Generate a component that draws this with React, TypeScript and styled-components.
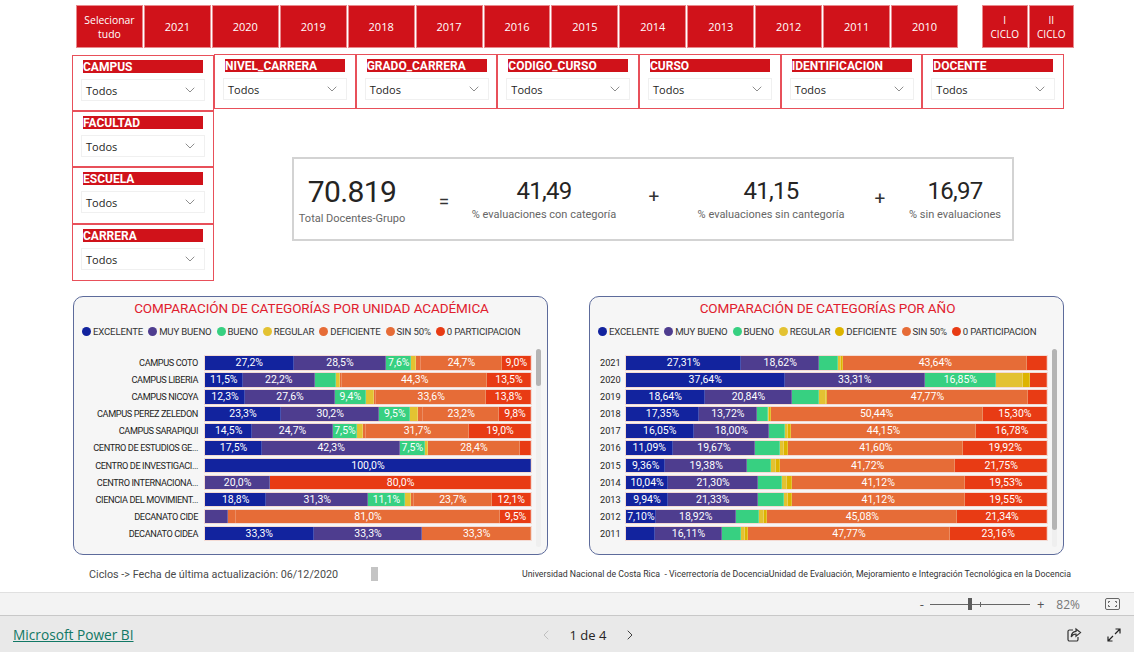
import React from 'react'
import styled, { createGlobalStyle } from 'styled-components'
import { ChevronDown, ChevronLeft, ChevronRight } from 'lucide-react'

const RED = '#d0121a'
const DIN = 'Roboto, "Liberation Sans", sans-serif'
const UI = '"Open Sans", "Noto Sans", sans-serif'

const GlobalStyle = createGlobalStyle`
  html, body {
    margin: 0;
    padding: 0;
    background: #fff;
    overflow: hidden;
  }
  * {
    box-sizing: border-box;
  }
`

const Page = styled.div`
  width: 1134px;
  height: 652px;
  display: flex;
  flex-direction: column;
  font-family: ${DIN};
`

const Report = styled.main`
  height: 592px;
  flex: none;
  padding-top: 5px;
  display: flex;
  flex-direction: column;
`

const ButtonRow = styled.div`
  display: flex;
  height: 43px;
  padding-left: 76px;
  gap: 24px;
`

const YearGrid = styled.div`
  width: 882px;
  display: grid;
  grid-template-columns: repeat(13, 1fr);
  gap: 1px;
`

const CycleGrid = styled.div`
  width: 92px;
  display: grid;
  grid-template-columns: 1fr 1fr;
  gap: 1px;
`

const FilterButton = styled.button<{ $size?: number }>`
  background: ${RED};
  border: 1px solid #e98a8d;
  color: #fff;
  padding: 0 2px;
  font-family: ${UI};
  font-size: ${({ $size }) => $size ?? 11}px;
  line-height: 14px;
`

const Filters = styled.div`
  display: flex;
  align-items: flex-start;
  padding: 6px 0 0 72px;
  height: 248px;
`

const SideColumn = styled.div`
  width: 142px;
  margin-top: 1px;
  display: flex;
  flex-direction: column;
`

const MainColumn = styled.div`
  width: 850px;
  display: flex;
  flex-direction: column;
`

const SlicerRow = styled.div`
  display: grid;
  grid-template-columns: repeat(6, 1fr);
`

const Slicer = styled.div<{ $height?: number }>`
  height: ${({ $height }) => $height ?? 55}px;
  border: 1px solid #e8505a;
  padding: 4px 0 0 8px;
`

const SlicerTitle = styled.div`
  width: 120px;
  height: 13px;
  margin-left: 2px;
  background: ${RED};
  color: #fff;
  font-size: 12px;
  font-weight: 700;
  line-height: 15px;
`

const SlicerInput = styled.div`
  width: 124px;
  height: 22px;
  margin-top: 6px;
  border: 1px solid #f0f0f0;
  padding: 0 6px 0 4px;
  display: flex;
  align-items: center;
  justify-content: space-between;
  color: #252423;
  font-family: ${UI};
  font-size: 11px;
`

const KpiCard = styled.section`
  width: 722px;
  height: 84px;
  margin: 48px 0 0 78px;
  border: 2px solid #d3d3d3;
  display: flex;
  align-items: flex-start;
`

const KpiCell = styled.div<{ $width: number; $top: number }>`
  width: ${({ $width }) => $width}px;
  flex: none;
  padding-top: ${({ $top }) => $top}px;
  display: flex;
  flex-direction: column;
  align-items: center;
  white-space: nowrap;
`

const KpiValue = styled.div<{ $large?: boolean }>`
  color: #252423;
  font-size: ${({ $large }) => ($large ? '30px' : '24px')};
  line-height: ${({ $large }) => ($large ? '34px' : '28px')};
  letter-spacing: ${({ $large }) => ($large ? '-0.6px' : '-0.7px')};
`

const KpiLabel = styled.div`
  color: #666;
  font-size: 11px;
  line-height: 14px;
  margin-top: 3px;
`

const KpiOperator = styled.div<{ $width: number; $top: number }>`
  width: ${({ $width }) => $width}px;
  flex: none;
  padding-top: ${({ $top }) => $top}px;
  text-align: center;
  color: #333;
  font-size: 19px;
  line-height: 22px;
`

const ChartRow = styled.div`
  display: flex;
  gap: 41px;
  padding-left: 73px;
`

const ChartCard = styled.section`
  width: 475px;
  height: 259px;
  background: #f6f6f6;
  border: 1px solid #5d6b9b;
  border-radius: 10px;
  padding: 2px 6px 0 8px;
  display: flex;
  flex-direction: column;
`

const ChartTitle = styled.h2`
  margin: 0;
  text-align: center;
  color: #e0202e;
  font-size: 13.5px;
  font-weight: 400;
  line-height: 18px;
  letter-spacing: -0.08px;
`

const Legend = styled.ul`
  list-style: none;
  margin: 7px 0 0;
  padding: 0;
  height: 14px;
  display: flex;
  gap: 5px;
`

const LegendItem = styled.li`
  display: flex;
  align-items: center;
  gap: 2px;
  color: #333;
  font-size: 9.6px;
  letter-spacing: -0.16px;
  white-space: nowrap;
`

const LegendDot = styled.span<{ $color: string }>`
  width: 9px;
  height: 9px;
  border-radius: 50%;
  background: ${({ $color }) => $color};
`

const PlotArea = styled.div`
  flex: none;
  margin-top: 11px;
  display: flex;
  gap: 5px;
  height: 198px;
`

const Rows = styled.div`
  flex: 1;
  padding-top: 7px;
  display: flex;
  flex-direction: column;
  gap: 3.6px;
`

const BarRow = styled.div<{ $labelWidth: number }>`
  display: grid;
  grid-template-columns: ${({ $labelWidth }) => $labelWidth}px 1fr;
  column-gap: 7px;
  height: 13.5px;
`

const RowLabel = styled.div<{ $left?: boolean }>`
  color: #252423;
  font-size: 9.2px;
  letter-spacing: ${({ $left }) => ($left ? '0' : '-0.4px')};
  line-height: 13.5px;
  text-align: ${({ $left }) => ($left ? 'left' : 'right')};
  padding-left: ${({ $left }) => ($left ? '2px' : '0')};
  white-space: nowrap;
`

const Bar = styled.div`
  display: flex;
  height: 13.5px;
  outline: 1px solid rgba(240, 170, 150, 0.35);
`

const Segment = styled.div`
  min-width: 0;
  color: #fff;
  font-size: 10.5px;
  line-height: 13.5px;
  text-align: center;
  overflow: hidden;
  white-space: nowrap;
  box-shadow: inset -1px 0 rgba(255, 255, 255, 0.22);
`

const ScrollTrack = styled.div`
  width: 5px;
  flex: none;
  background: #efefef;
  border-radius: 3px;
`

const ScrollThumb = styled.div<{ $height: number }>`
  height: ${({ $height }) => $height}px;
  background: #b4b4b4;
  border-radius: 3px;
`

const Footer = styled.div`
  display: flex;
  align-items: center;
  height: 14px;
  margin-top: 12px;
  padding-left: 89px;
  color: #4a4a4a;
`

const UpdatedText = styled.span`
  width: 282px;
  flex: none;
  font-size: 10.8px;
`

const FooterMark = styled.span`
  width: 7px;
  height: 14px;
  flex: none;
  background: #c4c4c4;
`

const CreditText = styled.span`
  margin-left: 144px;
  font-size: 8.75px;
  white-space: nowrap;
  color: #333;
`

const ZoomBar = styled.div`
  height: 24px;
  flex: none;
  background: #f3f3f3;
  border-top: 1px solid #e0e0e0;
  border-bottom: 1px solid #c8c8c8;
  display: flex;
  align-items: center;
  justify-content: flex-end;
  padding-right: 14px;
  font-family: ${UI};
  color: #666;
`

const ZoomStep = styled.span`
  font-size: 13px;
  line-height: 20px;
  color: #555;
`

const ZoomSlider = styled.div`
  position: relative;
  width: 100px;
  height: 1px;
  margin: 0 7px 0 6px;
  background: #666;
`

const ZoomThumb = styled.span`
  position: absolute;
  left: 38px;
  top: -6px;
  width: 4px;
  height: 12px;
  background: #5c5c5c;
`

const ZoomTick = styled.span`
  position: absolute;
  left: 50px;
  top: -2px;
  width: 1px;
  height: 5px;
  background: #666;
`

const ZoomValue = styled.span`
  margin: 0 25px 0 12px;
  font-size: 12px;
  color: #777;
`

const BottomBar = styled.footer`
  flex: 1;
  background: #e9e9e9;
  display: grid;
  grid-template-columns: 1fr auto 1fr;
  align-items: center;
  padding: 1px 13px 0;
  font-family: ${UI};
`

const PowerBiLink = styled.a`
  color: #117865;
  font-size: 13.7px;
  text-decoration: underline;
`

const Pager = styled.div`
  display: flex;
  align-items: center;
  gap: 16px;
  margin-left: 42px;
  color: #252423;
  font-size: 13px;
  font-weight: 500;
`

const BottomActions = styled.div`
  display: flex;
  justify-content: flex-end;
  align-items: center;
  gap: 25px;
`

const categories = {
  excelente: '#12239e',
  muyBueno: '#4e3d8f',
  bueno: '#37d081',
  regular: '#e3c232',
  sin: '#e66c37',
  cero: '#e83b14',
}

const legendNames = ['EXCELENTE', 'MUY BUENO', 'BUENO', 'REGULAR', 'DEFICIENTE', 'SIN 50%', '0 PARTICIPACION']

const seriesColors = (deficiente: string) => [
  categories.excelente,
  categories.muyBueno,
  categories.bueno,
  categories.regular,
  deficiente,
  categories.sin,
  categories.cero,
]

type Row = [string, number[]]

const unitRows: Row[] = [
  ['CAMPUS COTO', [27.2, 28.5, 7.6, 1.5, 1.6, 24.7, 9.0]],
  ['CAMPUS LIBERIA', [11.5, 22.2, 6.5, 1.3, 0.6, 44.3, 13.5]],
  ['CAMPUS NICOYA', [12.3, 27.6, 9.4, 2.5, 0.8, 33.6, 13.8]],
  ['CAMPUS PEREZ ZELEDON', [23.3, 30.2, 9.5, 2.4, 1.6, 23.2, 9.8]],
  ['CAMPUS SARAPIQUI', [14.5, 24.7, 7.5, 1.9, 0.7, 31.7, 19.0]],
  ['CENTRO DE ESTUDIOS GE...', [17.5, 42.3, 7.5, 0.9, 0, 28.4, 3.3]],
  ['CENTRO DE INVESTIGACI...', [100, 0, 0, 0, 0, 0, 0]],
  ['CENTRO INTERNACIONA...', [0, 20, 0, 0, 0, 0, 80]],
  ['CIENCIA DEL MOVIMIENT...', [18.8, 31.3, 11.1, 1.9, 1.1, 23.7, 12.1]],
  ['DECANATO CIDE', [0, 7.1, 0, 0, 2.4, 81.0, 9.5]],
  ['DECANATO CIDEA', [33.3, 33.3, 0, 0, 0, 33.3, 0]],
]

const yearRows: Row[] = [
  ['2021', [27.31, 18.62, 4.5, 0.7, 0.5, 43.64, 4.7]],
  ['2020', [37.64, 33.31, 16.85, 6.4, 1.8, 0, 3.95]],
  ['2019', [18.64, 20.84, 6.3, 1.7, 0.2, 47.77, 4.5]],
  ['2018', [17.35, 13.72, 2.6, 0.4, 0.3, 50.44, 15.3]],
  ['2017', [16.05, 18.0, 3.8, 0.7, 0.6, 44.15, 16.78]],
  ['2016', [11.09, 19.67, 5.9, 1.0, 1.0, 41.6, 19.92]],
  ['2015', [9.36, 19.38, 5.8, 1.1, 0.9, 41.72, 21.75]],
  ['2014', [10.04, 21.3, 5.7, 1.3, 1.0, 41.12, 19.53]],
  ['2013', [9.94, 21.33, 6.2, 1.0, 0.9, 41.12, 19.55]],
  ['2012', [7.1, 18.92, 5.6, 1.1, 0.9, 45.08, 21.34]],
  ['2011', [6.8, 16.11, 4.4, 0.9, 0.9, 47.77, 23.16]],
]

const years = ['2021', '2020', '2019', '2018', '2017', '2016', '2015', '2014', '2013', '2012', '2011', '2010']
const topSlicers = ['NIVEL_CARRERA', 'GRADO_CARRERA', 'CODIGO_CURSO', 'CURSO', 'IDENTIFICACION', 'DOCENTE']
const sideSlicers = [
  { name: 'CAMPUS', height: 56 },
  { name: 'FACULTAD', height: 56 },
  { name: 'ESCUELA', height: 57 },
  { name: 'CARRERA', height: 57 },
]

const SlicerBox = ({ title, height }: { title: string; height?: number }) => (
  <Slicer $height={height}>
    <SlicerTitle>{title}</SlicerTitle>
    <SlicerInput>
      Todos
      <ChevronDown size={16} strokeWidth={1} color="#555" />
    </SlicerInput>
  </Slicer>
)

type ChartProps = {
  title: string
  rows: Row[]
  colors: string[]
  decimals: number
  minLabel: number
  labelWidth: number
  thumb: number
  leftLabels?: boolean
}

const Chart = ({ title, rows, colors, decimals, minLabel, labelWidth, thumb, leftLabels }: ChartProps) => (
  <ChartCard>
    <ChartTitle>{title}</ChartTitle>
    <Legend>
      {legendNames.map((name, i) => (
        <LegendItem key={name}>
          <LegendDot $color={colors[i]} />
          {name}
        </LegendItem>
      ))}
    </Legend>
    <PlotArea>
      <Rows>
        {rows.map(([label, values]) => (
          <BarRow key={label} $labelWidth={labelWidth}>
            <RowLabel $left={leftLabels}>{label}</RowLabel>
            <Bar>
              {values.map((value, i) =>
                value > 0 ? (
                  <Segment key={i} style={{ flex: `${value} 1 0`, background: colors[i] }}>
                    {value >= minLabel ? `${value.toFixed(decimals).replace('.', ',')}%` : ''}
                  </Segment>
                ) : null,
              )}
            </Bar>
          </BarRow>
        ))}
      </Rows>
      <ScrollTrack>
        <ScrollThumb $height={thumb} />
      </ScrollTrack>
    </PlotArea>
  </ChartCard>
)

const ShareIcon = () => (
  <svg width="16" height="16" viewBox="0 0 16 16" fill="none" stroke="#333" strokeWidth="1.2">
    <path d="M7 3H3.5A1.5 1.5 0 0 0 2 4.5v8A1.5 1.5 0 0 0 3.5 14h7a1.5 1.5 0 0 0 1.5-1.5V10" />
    <path d="M10 2l4.5 3.6L10 9.2V7c-2.4 0-3.8 1-4.8 3 .2-3.4 1.9-5.4 4.8-5.6z" />
  </svg>
)

const ExpandIcon = () => (
  <svg width="14" height="14" viewBox="0 0 14 14" fill="none" stroke="#222" strokeWidth="1.2">
    <path d="M8.5 1H13v4.5M13 1L8 6M5.500 13H1V8.5M1 13l5-5" />
  </svg>
)

const FitIcon = () => (
  <svg width="15" height="12" viewBox="0 0 15 12" fill="none" stroke="#666">
    <rect x="0.5" y="0.5" width="14" height="11" rx="1.5" />
    <path d="M5 3.5H3.5V5M10 3.5h1.5V5M5 8.5H3.5V7M10 8.5h1.500V7" />
  </svg>
)

const App = () => (
  <Page>
    <GlobalStyle />
    <Report>
      <ButtonRow>
        <YearGrid>
          <FilterButton $size={10.4}>Selecionar tudo</FilterButton>
          {years.map((year) => (
            <FilterButton key={year}>{year}</FilterButton>
          ))}
        </YearGrid>
        <CycleGrid>
          <FilterButton $size={10}>I<br />CICLO</FilterButton>
          <FilterButton $size={10}>II<br />CICLO</FilterButton>
        </CycleGrid>
      </ButtonRow>

      <Filters>
        <SideColumn>
          {sideSlicers.map(({ name, height }) => (
            <SlicerBox key={name} title={name} height={height} />
          ))}
        </SideColumn>
        <MainColumn>
          <SlicerRow>
            {topSlicers.map((name) => (
              <SlicerBox key={name} title={name} />
            ))}
          </SlicerRow>
          <KpiCard>
            <KpiCell $width={116} $top={16}>
              <KpiValue $large>70.819</KpiValue>
              <KpiLabel>Total Docentes-Grupo</KpiLabel>
            </KpiCell>
            <KpiOperator $width={68} $top={32}>=</KpiOperator>
            <KpiCell $width={132} $top={18}>
              <KpiValue>41,49</KpiValue>
              <KpiLabel>% evaluaciones con categoría</KpiLabel>
            </KpiCell>
            <KpiOperator $width={88} $top={27}>+</KpiOperator>
            <KpiCell $width={146} $top={18}>
              <KpiValue>41,15</KpiValue>
              <KpiLabel>% evaluaciones sin cantegoría</KpiLabel>
            </KpiCell>
            <KpiOperator $width={72} $top={29}>+</KpiOperator>
            <KpiCell $width={78} $top={18}>
              <KpiValue>16,97</KpiValue>
              <KpiLabel>% sin evaluaciones</KpiLabel>
            </KpiCell>
          </KpiCard>
        </MainColumn>
      </Filters>

      <ChartRow>
        <Chart
          title="COMPARACIÓN DE CATEGORÍAS POR UNIDAD ACADÉMICA"
          rows={unitRows}
          colors={seriesColors(categories.sin)}
          decimals={1}
          minLabel={7.5}
          labelWidth={116}
          thumb={37}
        />
        <Chart
          title="COMPARACIÓN DE CATEGORÍAS POR AÑO"
          rows={yearRows}
          colors={seriesColors('#ddb400')}
          decimals={2}
          minLabel={7}
          labelWidth={21}
          thumb={181}
          leftLabels
        />
      </ChartRow>

      <Footer>
        <UpdatedText>Ciclos -&gt; Fecha de última actualización: 06/12/2020</UpdatedText>
        <FooterMark />
        <CreditText>
          Universidad Nacional de Costa Rica &nbsp;- Vicerrectoría de DocenciaUnidad de Evaluación, Mejoramiento e Integración Tecnológica en la Docencia
        </CreditText>
      </Footer>
    </Report>

    <ZoomBar>
      <ZoomStep>-</ZoomStep>
      <ZoomSlider>
        <ZoomThumb />
        <ZoomTick />
      </ZoomSlider>
      <ZoomStep>+</ZoomStep>
      <ZoomValue>82%</ZoomValue>
      <FitIcon />
    </ZoomBar>

    <BottomBar>
      <PowerBiLink href="#">Microsoft Power BI</PowerBiLink>
      <Pager>
        <ChevronLeft size={16} strokeWidth={1.2} color="#b5b5b5" />
        1 de 4
        <ChevronRight size={16} strokeWidth={1.4} color="#333" />
      </Pager>
      <BottomActions>
        <ShareIcon />
        <ExpandIcon />
      </BottomActions>
    </BottomBar>
  </Page>
)

export default App
